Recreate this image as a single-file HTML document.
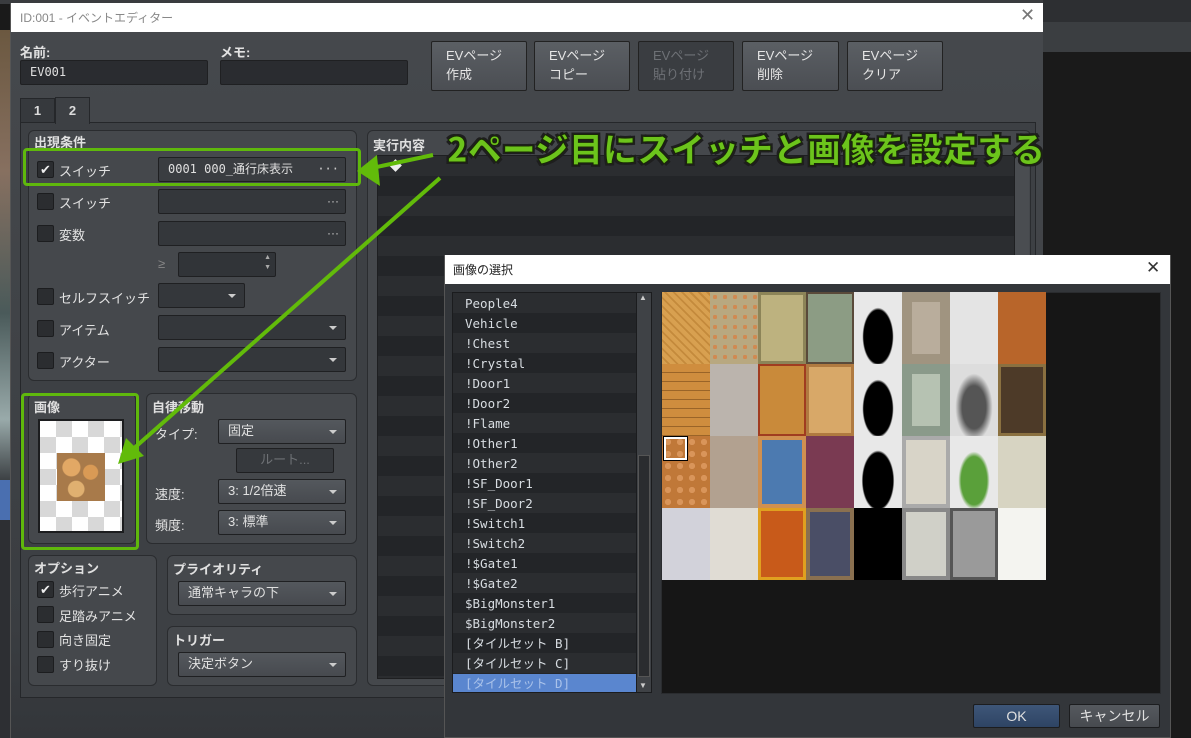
<!DOCTYPE html>
<html><head><meta charset="utf-8"><style>
*{box-sizing:border-box;margin:0;padding:0}
body{width:1191px;height:738px;overflow:hidden;background:#1a1a1a;position:relative;font-family:"Liberation Sans","Noto Sans CJK JP",sans-serif;font-size:13px;color:#dcdcdc}
.a{position:absolute}
.grp{position:absolute;background:#45484c;border:1px solid #2a2c2f;border-radius:6px}
.gt{position:absolute;font-weight:bold;color:#e0e0e0;font-size:13px}
.cb{position:absolute;width:17px;height:17px;background:#2b2d30;border:1px solid #1c1d1f;border-radius:2px;color:#eee;font-size:13px;line-height:15px;text-align:center}
.lb{position:absolute;color:#e2e2e2;font-size:13px}
.fd{position:absolute;background:#34373b;border:1px solid #1f2022;border-radius:2px;color:#e0e0e0;padding-left:9px;line-height:22px;font-size:13px}
.dd{position:absolute;background:linear-gradient(#54585d,#474a4f);border:1px solid #1f2022;border-radius:2px;color:#e0e0e0;padding-left:9px;line-height:22px;font-size:13px}
.dd:after{content:"";position:absolute;right:8px;top:10px;border-left:4px solid transparent;border-right:4px solid transparent;border-top:4px solid #ccc}
.dots{position:absolute;right:6px;top:0;color:#ccc;font-size:12px}
.btn{position:absolute;background:linear-gradient(#5b5f64,#4b4e53);border:1px solid #222;border-radius:2px;color:#e6e6e6;font-size:13px;line-height:19px;padding:4px 0 0 14px}
.li{position:absolute;left:0;width:183px;height:20px;padding-left:12px;line-height:20px;font-family:"DejaVu Sans Mono","Noto Sans CJK JP",monospace;font-size:12.5px;color:#d8dde2}
</style></head><body>
<div class="a" style="left:0;top:0;width:1191px;height:4px;background:#3a3c3f"></div>
<div class="a" style="left:1043px;top:0;width:148px;height:22px;background:#2d2f32"></div>
<div class="a" style="left:1043px;top:22px;width:148px;height:30px;background:#3b3e41"></div>
<div class="a" style="left:0;top:30px;width:10px;height:708px;background:linear-gradient(#6b5840,#877060 20%,#4a5a5a 40%,#9aa 55%,#2d2f33 65%,#2d2f33)"></div>
<div class="a" style="left:0;top:480px;width:10px;height:40px;background:#4a6fb0"></div>

<div class="a" style="left:10px;top:3px;width:1033px;height:735px;background:linear-gradient(#46494d,#3a3d41 85%,#33363a);border-left:1px solid #555"></div>
<div class="a" style="left:11px;top:3px;width:1032px;height:29px;background:#fff"></div>
<div class="a" style="left:20px;top:9px;color:#888;font-size:12px">ID:001 - イベントエディター</div>
<div class="a" style="left:1020px;top:5px;color:#777;font-size:18px;font-weight:300">✕</div>

<div class="lb" style="left:20px;top:42px;font-weight:bold">名前:</div>
<div class="fd" style="left:20px;top:60px;width:188px;height:25px;background:#2a2c30;line-height:23px;font-family:'DejaVu Sans Mono',monospace;font-size:12px">EV001</div>
<div class="lb" style="left:220px;top:42px;font-weight:bold">メモ:</div>
<div class="fd" style="left:220px;top:60px;width:188px;height:25px;background:#2a2c30"></div>

<div class="btn" style="left:431px;top:41px;width:96px;height:50px">EVページ<br>作成</div>
<div class="btn" style="left:534px;top:41px;width:96px;height:50px">EVページ<br>コピー</div>
<div class="btn" style="left:638px;top:41px;width:96px;height:50px;background:#3a3d41;color:#6e7176">EVページ<br>貼り付け</div>
<div class="btn" style="left:742px;top:41px;width:97px;height:50px">EVページ<br>削除</div>
<div class="btn" style="left:847px;top:41px;width:96px;height:50px">EVページ<br>クリア</div>

<div class="a" style="left:20px;top:122px;width:1016px;height:576px;border:1px solid #25272a;background:#3d4044"></div>
<div class="a" style="left:20px;top:98px;width:35px;height:25px;background:#36393d;border:1px solid #25272a;text-align:center;line-height:23px;font-weight:bold">1</div>
<div class="a" style="left:55px;top:97px;width:35px;height:27px;background:#3d4044;border:1px solid #25272a;border-bottom:none;text-align:center;line-height:25px;font-weight:bold">2</div>

<div class="grp" style="left:28px;top:130px;width:329px;height:251px"></div>
<div class="gt" style="left:34px;top:132px">出現条件</div>
<div class="cb" style="left:37px;top:161px">✔</div><div class="lb" style="left:59px;top:161px">スイッチ</div>
<div class="fd" style="left:158px;top:157px;width:188px;height:25px;background:#3a3d41;font-family:'DejaVu Sans Mono','Noto Sans CJK JP',monospace;font-size:12px">0001 000_通行床表示<span class="dots">···</span></div>
<div class="cb" style="left:37px;top:193px"></div><div class="lb" style="left:59px;top:193px">スイッチ</div>
<div class="fd" style="left:158px;top:189px;width:188px;height:25px"><span class="dots">···</span></div>
<div class="cb" style="left:37px;top:225px"></div><div class="lb" style="left:59px;top:225px">変数</div>
<div class="fd" style="left:158px;top:221px;width:188px;height:25px"><span class="dots">···</span></div>
<div class="lb" style="left:158px;top:256px;color:#888">≥</div>
<div class="fd" style="left:178px;top:252px;width:98px;height:25px;background:#313438"><span class="a" style="right:4px;top:-6px;color:#aaa;font-size:7px">▲</span><span class="a" style="right:4px;top:4px;color:#aaa;font-size:7px">▼</span></div>
<div class="cb" style="left:37px;top:288px"></div><div class="lb" style="left:59px;top:288px">セルフスイッチ</div>
<div class="dd" style="left:158px;top:283px;width:87px;height:25px;background:#34373b"></div>
<div class="cb" style="left:37px;top:320px"></div><div class="lb" style="left:59px;top:320px">アイテム</div>
<div class="dd" style="left:158px;top:315px;width:188px;height:25px;background:#34373b"></div>
<div class="cb" style="left:37px;top:352px"></div><div class="lb" style="left:59px;top:352px">アクター</div>
<div class="dd" style="left:158px;top:347px;width:188px;height:25px;background:#34373b"></div>

<div class="grp" style="left:367px;top:130px;width:664px;height:556px"></div>
<div class="gt" style="left:373px;top:135px">実行内容</div>
<div class="a" style="left:377px;top:155px;width:638px;height:524px;border:1px solid #1e1f21;background:repeating-linear-gradient(#2b2d30 0 20px,#232528 20px 40px)"></div>
<div class="a" style="left:391px;top:161px;width:9px;height:9px;background:#eee;transform:rotate(45deg)"></div>
<div class="a" style="left:1015px;top:155px;width:14px;height:524px;background:#4a4d51"></div>

<div class="grp" style="left:28px;top:393px;width:108px;height:151px"></div>
<div class="gt" style="left:34px;top:397px">画像</div>
<div class="a" style="left:38px;top:419px;width:86px;height:114px;border:2px solid #1c1d1f;background-color:#fff;background-image:linear-gradient(45deg,#d8d8d8 25%,transparent 25%,transparent 75%,#d8d8d8 75%),linear-gradient(45deg,#d8d8d8 25%,transparent 25%,transparent 75%,#d8d8d8 75%);background-size:32px 32px;background-position:0 0,16px 16px"></div>
<div class="a" style="left:57px;top:453px;width:48px;height:48px;background:radial-gradient(circle at 30% 30%,#e2a865 0 18%,transparent 20%),radial-gradient(circle at 70% 40%,#d99a55 0 16%,transparent 18%),radial-gradient(circle at 40% 75%,#e0b070 0 17%,transparent 19%),#a87a4a"></div>

<div class="grp" style="left:146px;top:393px;width:211px;height:151px"></div>
<div class="gt" style="left:152px;top:397px">自律移動</div>
<div class="lb" style="left:155px;top:424px">タイプ:</div>
<div class="dd" style="left:218px;top:419px;width:128px;height:25px">固定</div>
<div class="fd" style="left:236px;top:448px;width:98px;height:25px;background:#36393d;color:#6e7175;text-align:center;padding:0">ルート...</div>
<div class="lb" style="left:155px;top:484px">速度:</div>
<div class="dd" style="left:218px;top:479px;width:128px;height:25px">3: 1/2倍速</div>
<div class="lb" style="left:155px;top:515px">頻度:</div>
<div class="dd" style="left:218px;top:510px;width:128px;height:25px">3: 標準</div>

<div class="grp" style="left:28px;top:555px;width:129px;height:131px"></div>
<div class="gt" style="left:34px;top:558px">オプション</div>
<div class="cb" style="left:37px;top:581px">✔</div><div class="lb" style="left:59px;top:581px">歩行アニメ</div>
<div class="cb" style="left:37px;top:606px"></div><div class="lb" style="left:59px;top:606px">足踏みアニメ</div>
<div class="cb" style="left:37px;top:631px"></div><div class="lb" style="left:59px;top:630px">向き固定</div>
<div class="cb" style="left:37px;top:656px"></div><div class="lb" style="left:59px;top:655px">すり抜け</div>

<div class="grp" style="left:167px;top:555px;width:190px;height:60px"></div>
<div class="gt" style="left:173px;top:559px">プライオリティ</div>
<div class="dd" style="left:178px;top:581px;width:168px;height:25px">通常キャラの下</div>
<div class="grp" style="left:167px;top:626px;width:190px;height:60px"></div>
<div class="gt" style="left:173px;top:630px">トリガー</div>
<div class="dd" style="left:178px;top:652px;width:168px;height:25px">決定ボタン</div>

<div class="a" style="left:23px;top:148px;width:338px;height:38px;border:3px solid #5fb80c;border-radius:4px"></div>
<div class="a" style="left:21px;top:393px;width:118px;height:157px;border:3px solid #5fb80c;border-radius:4px"></div>

<div class="a" style="left:444px;top:255px;width:727px;height:483px;background:#33363a;border:1px solid #555"></div>
<div class="a" style="left:445px;top:255px;width:725px;height:29px;background:#fff"></div>
<div class="a" style="left:453px;top:261px;color:#222;font-size:12px">画像の選択</div>
<div class="a" style="left:1146px;top:258px;color:#333;font-size:17px">✕</div>
<div class="a" style="left:452px;top:292px;width:200px;height:401px;border:1px solid #1b1c1e;background:#25272a;overflow:hidden">
<div style="position:absolute;left:0;top:0;width:183px;height:400px;background:repeating-linear-gradient(#2b2d30 0 20px,#232528 20px 40px)"></div>
<div class="li" style="top:1px">People4</div>
<div class="li" style="top:21px">Vehicle</div>
<div class="li" style="top:41px">!Chest</div>
<div class="li" style="top:61px">!Crystal</div>
<div class="li" style="top:81px">!Door1</div>
<div class="li" style="top:101px">!Door2</div>
<div class="li" style="top:121px">!Flame</div>
<div class="li" style="top:141px">!Other1</div>
<div class="li" style="top:161px">!Other2</div>
<div class="li" style="top:181px">!SF_Door1</div>
<div class="li" style="top:201px">!SF_Door2</div>
<div class="li" style="top:221px">!Switch1</div>
<div class="li" style="top:241px">!Switch2</div>
<div class="li" style="top:261px">!$Gate1</div>
<div class="li" style="top:281px">!$Gate2</div>
<div class="li" style="top:301px">$BigMonster1</div>
<div class="li" style="top:321px">$BigMonster2</div>
<div class="li" style="top:341px">[タイルセット B]</div>
<div class="li" style="top:361px">[タイルセット C]</div>
<div class="li" style="top:381px;background:#5a86cf;color:#a9c2ea">[タイルセット D]</div>
<div style="position:absolute;left:183px;top:0;width:16px;height:400px;background:#3f4246;border-left:1px solid #1b1c1e"></div>
<div style="position:absolute;left:185px;top:162px;width:12px;height:222px;background:#2a2c2f;border:1px solid #555"></div>
<div style="position:absolute;left:186px;top:0;color:#ccc;font-size:8px">▲</div>
<div style="position:absolute;left:186px;top:388px;color:#ccc;font-size:8px">▼</div>
</div>
<div class="a" style="left:661px;top:292px;width:500px;height:402px;background:#161616;border:1px solid #2a2c2f"></div>
<div class="a" style="left:662px;top:292px;width:384px;height:288px;display:grid;grid-template-columns:repeat(8,48px);grid-template-rows:repeat(4,72px)">
<div style="background:repeating-linear-gradient(45deg,#d8a050 0 4px,#c48a3c 4px 6px)"></div>
<div style="background:radial-gradient(circle,#d08a52 0 30%,#b8a880 32%) 0 0/10px 10px"></div>
<div style="background:#bdb27f;box-shadow:inset 0 0 0 3px #8c8458"></div>
<div style="background:#8c9c84;box-shadow:inset 0 0 0 2px #5a4a3a"></div>
<div style="background:radial-gradient(ellipse at 50% 62%,#000 0 42%,#e8e8e8 46%)"></div>
<div style="background:#b9ad9c;box-shadow:inset 0 0 0 10px #a09480"></div>
<div style="background:#e4e4e4"></div>
<div style="background:#b8652a"></div>
<div style="background:repeating-linear-gradient(#cf8d3e 0 8px,#9a6428 8px 9px)"></div>
<div style="background:#bbb4ad"></div>
<div style="background:#c98a3a;box-shadow:inset 0 0 0 2px #a03c20"></div>
<div style="background:#d8a868;box-shadow:inset 0 0 0 3px #b07a40"></div>
<div style="background:radial-gradient(ellipse at 50% 62%,#000 0 42%,#e8e8e8 46%)"></div>
<div style="background:#b6c2b2;box-shadow:inset 0 0 0 10px #8a9a8a"></div>
<div style="background:radial-gradient(ellipse at 50% 60%,#555 0 35%,#ddd 55%)"></div>
<div style="background:#4d3a28;box-shadow:inset 0 0 0 3px #8a7040"></div>
<div style="background:radial-gradient(circle,#d9955a 0 35%,#c07838 38%) 0 0/12px 12px"></div>
<div style="background:#b2a190"></div>
<div style="background:#4c7ab0;box-shadow:inset 0 0 0 4px #d09050"></div>
<div style="background:#7a3a52"></div>
<div style="background:radial-gradient(ellipse at 50% 62%,#000 0 44%,#e8e8e8 48%)"></div>
<div style="background:#d8d4c8;box-shadow:inset 0 0 0 4px #aaa"></div>
<div style="background:radial-gradient(ellipse at 50% 62%,#5aa03a 0 38%,#e8e8e8 46%)"></div>
<div style="background:#d7d4c2"></div>
<div style="background:#d2d2da"></div>
<div style="background:#e0dcd4"></div>
<div style="background:#c85a1a;box-shadow:inset 0 0 0 3px #e0a020"></div>
<div style="background:#4a4e66;box-shadow:inset 0 0 0 4px #8a7050"></div>
<div style="background:#000"></div>
<div style="background:#d0d0c8;box-shadow:inset 0 0 0 4px #888"></div>
<div style="background:#9a9a9a;box-shadow:inset 0 0 0 3px #555"></div>
<div style="background:#f4f4f0"></div>
</div>
<div class="a" style="left:664px;top:437px;width:23px;height:23px;border:2px solid #fff;outline:1px solid #000"></div>
<div class="a" style="left:973px;top:704px;width:87px;height:24px;background:linear-gradient(#3e5678,#2e4464);border:1px solid #1c1d1f;border-radius:2px;text-align:center;line-height:22px;color:#e0e0e0;font-size:14px">OK</div>
<div class="a" style="left:1069px;top:704px;width:91px;height:24px;background:linear-gradient(#55595e,#474a4f);border:1px solid #1c1d1f;border-radius:2px;text-align:center;line-height:22px;color:#e0e0e0;font-size:14px">キャンセル</div>

<svg class="a" style="left:0;top:0" width="1191" height="738">
<line x1="433" y1="155" x2="372" y2="168" stroke="#62bb0a" stroke-width="4"/>
<polygon points="357,171 377,155 380,186" fill="#62bb0a"/>
<line x1="440" y1="178" x2="132" y2="450" stroke="#62bb0a" stroke-width="4"/>
<polygon points="118,464 126,438 144,456" fill="#62bb0a"/>
</svg>
<div class="a" style="left:447px;top:125px;font-size:34px;font-weight:900;color:#6cc41c;letter-spacing:0;font-family:'Noto Sans CJK JP',sans-serif;-webkit-text-stroke:1px #1a2a05;text-shadow:-2px -2px 0 #1e1e1e,2px -2px 0 #1e1e1e,-2px 2px 0 #1e1e1e,2px 2px 0 #1e1e1e;line-height:46px;white-space:nowrap">2ページ目にスイッチと画像を設定する</div>
</body></html>
